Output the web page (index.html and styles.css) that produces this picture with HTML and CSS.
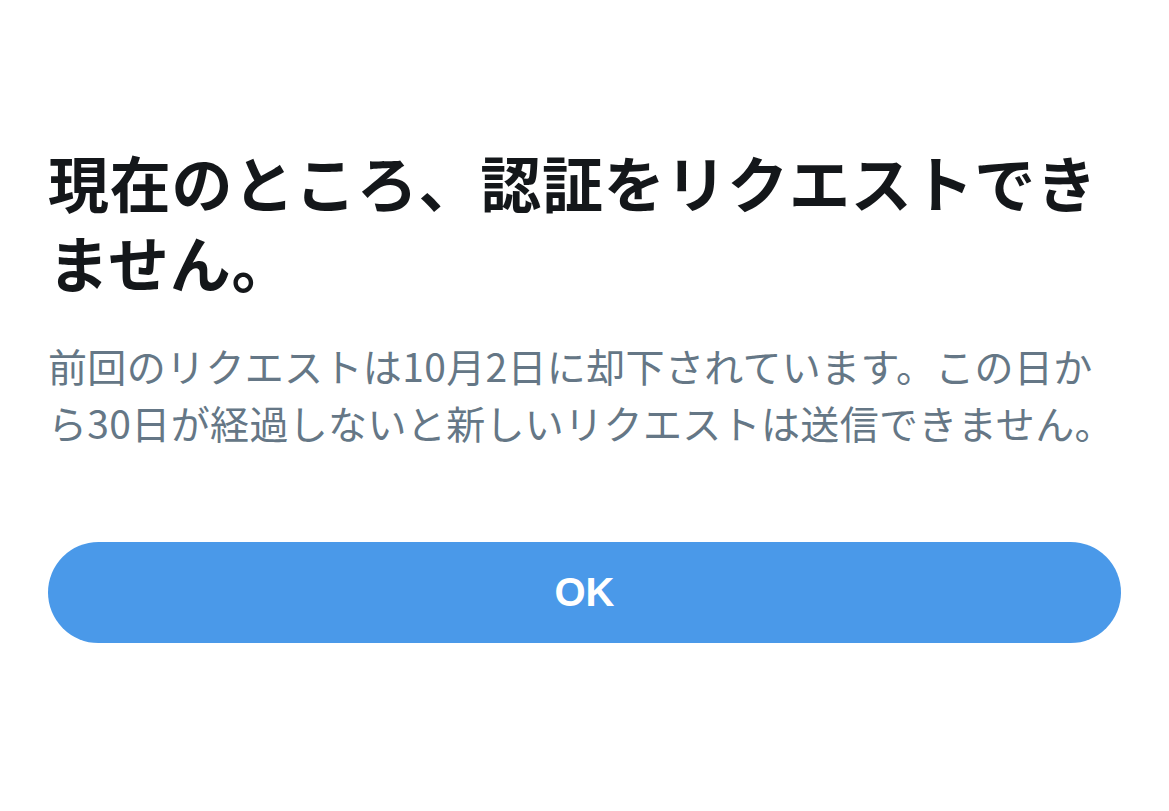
FILE: index.html
```html
<!DOCTYPE html>
<html lang="ja">
<head>
<meta charset="utf-8">
<link rel="stylesheet" href="styles.css">
</head>
<body>
<main class="dialog">
  <h1 class="title">現在のところ、認証をリクエストできません。</h1>
  <p class="message">前回のリクエストは10月2日に却下されています。この日から30日が経過しないと新しいリクエストは送信できません。</p>
  <button class="ok-button" type="button">OK</button>
</main>
</body>
</html>
```
FILE: styles.css
```css
html, body {
  margin: 0;
  padding: 0;
  background: #ffffff;
}
body {
  font-family: "Noto Sans CJK JP", "Noto Sans", sans-serif;
}
.dialog {
  display: flex;
  flex-direction: column;
  padding: 142px 48px 0 48px;
}
.title {
  margin: 0;
  font-size: 61px;
  letter-spacing: 0.75px;
  line-height: 80px;
  font-weight: 700;
  color: #14171a;
}
.message {
  margin: 35px 0 0 0;
  font-size: 39px;
  letter-spacing: 0.35px;
  line-height: 57px;
  font-weight: 400;
  color: #657786;
}
.ok-button {
  margin-top: 91px;
  height: 101px;
  border: none;
  border-radius: 51px;
  background: #4a99e9;
  color: #ffffff;
  font-family: "Liberation Sans", Arial, sans-serif;
  font-weight: 700;
  font-size: 40px;
}
```
